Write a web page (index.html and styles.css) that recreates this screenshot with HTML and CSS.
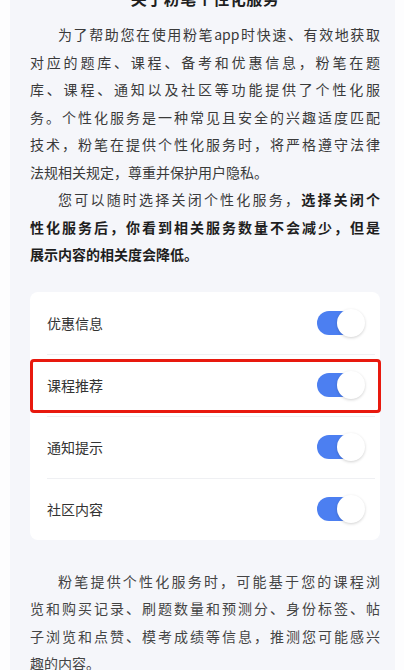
FILE: index.html
```html
<!DOCTYPE html>
<html lang="zh-CN">
<head>
<meta charset="utf-8">
<title>关于粉笔个性化服务</title>
<link rel="stylesheet" href="styles.css">
</head>
<body>
<div class="panel">
  <h1 class="title">关于粉笔个性化服务</h1>
  <p class="para">
    <span class="line first">为了帮助您在使用粉笔app时快速、有效地获取</span>
    <span class="line">对应的题库、课程、备考和优惠信息，粉笔在题</span>
    <span class="line">库、课程、通知以及社区等功能提供了个性化服</span>
    <span class="line">务。个性化服务是一种常见且安全的兴趣适度匹配</span>
    <span class="line">技术，粉笔在提供个性化服务时，将严格遵守法律</span>
    <span class="line last">法规相关规定，尊重并保护用户隐私。</span>
  </p>
  <p class="para">
    <span class="line first">您可以随时选择关闭个性化服务，<b>选择关闭个</b></span>
    <span class="line"><b>性化服务后，你看到相关服务数量不会减少，但是</b></span>
    <span class="line last"><b>展示内容的相关度会降低。</b></span>
  </p>

  <div class="card">
    <div class="row"><span class="label">优惠信息</span><span class="toggle"><span class="knob"></span></span></div>
    <div class="row"><span class="label">课程推荐</span><span class="toggle"><span class="knob"></span></span><span class="highlight"></span></div>
    <div class="row"><span class="label">通知提示</span><span class="toggle"><span class="knob"></span></span></div>
    <div class="row"><span class="label">社区内容</span><span class="toggle"><span class="knob"></span></span></div>
  </div>

  <p class="para bottom">
    <span class="line first">粉笔提供个性化服务时，可能基于您的课程浏</span>
    <span class="line">览和购买记录、刷题数量和预测分、身份标签、帖</span>
    <span class="line">子浏览和点赞、模考成绩等信息，推测您可能感兴</span>
    <span class="line last">趣的内容。</span>
  </p>
</div>
</body>
</html>
```

FILE: styles.css
```css
html, body {
  margin: 0;
  padding: 0;
  background: #fdfdfe;
  overflow: hidden;
}

body {
  font-family: "Noto Sans CJK SC", "Noto Sans", sans-serif;
  color: #3a3a3a;
}

.panel {
  display: flow-root;
  margin: 0 9px 0 10px;
  padding: 0 15px 0 20px;
  background: #f5f6fa;
  min-height: 700px;
}

.title {
  margin: -16px 0 9px 0;
  font-size: 16px;
  line-height: 28px;
  font-weight: 700;
  letter-spacing: 0.5px;
  text-align: center;
  color: #1f1f1f;
}

.para {
  margin: 0;
  font-size: 14px;
  line-height: 27.5px;
}

.line {
  display: block;
  white-space: nowrap;
  text-align: justify;
  text-align-last: justify;
}

.line.first {
  text-indent: 2em;
}

.line.last {
  text-align-last: left;
}

.para b {
  font-weight: 700;
  color: #1e1e1e;
}

.card {
  margin-top: 23px;
  background: #ffffff;
  border-radius: 8px;
}

.row {
  position: relative;
  box-sizing: border-box;
  height: 62px;
  margin: 0 5px 0 17px;
  padding-right: 10px;
  display: flex;
  align-items: center;
  justify-content: space-between;
}

.row + .row {
  border-top: 1px solid #eff0f3;
}

.label {
  font-size: 14px;
  color: #333333;
}

.toggle {
  position: relative;
  width: 46px;
  height: 24px;
  margin-right: 2px;
  border-radius: 12px;
  background: #4c7ff1;
}

.knob {
  position: absolute;
  top: -2px;
  right: -2px;
  width: 28px;
  height: 28px;
  border-radius: 50%;
  background: #ffffff;
  box-shadow: 0 1px 3px rgba(0, 0, 0, 0.18);
}

.highlight {
  position: absolute;
  left: -17px;
  right: -6px;
  top: 4px;
  bottom: 3px;
  border: 3px solid #e8190e;
  border-radius: 4px;
  pointer-events: none;
}

.para.bottom {
  margin-top: 28px;
  color: #444444;
}
```
